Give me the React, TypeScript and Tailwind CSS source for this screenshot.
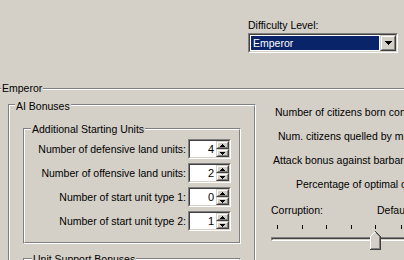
import type { ReactNode } from "react";

const font = { fontFamily: '"Liberation Sans", Arial, sans-serif' };

function GroupBox({
  label,
  className = "",
  innerClass = "",
  labelClass = "",
  children,
}: {
  label: string;
  className?: string;
  innerClass?: string;
  labelClass?: string;
  children?: ReactNode;
}) {
  return (
    <div className={`relative border border-t-[#808080] border-l-[#808080] border-r-white border-b-white ${className}`}>
      <div className={`h-full border border-t-white border-l-white border-r-[#808080] border-b-[#808080] ${innerClass}`}>
        {children}
      </div>
      <span className={`absolute bg-[#d4d0c8] px-[1px] leading-[13px] whitespace-nowrap ${labelClass}`}>{label}</span>
    </div>
  );
}

function Arrow({ up = false, w = 7, h = 4 }: { up?: boolean; w?: number; h?: number }) {
  const pts = up ? `0,${h} ${w / 2},0 ${w},${h}` : `0,0 ${w},0 ${w / 2},${h}`;
  return (
    <svg width={w} height={h} viewBox={`0 0 ${w} ${h}`} shapeRendering="crispEdges">
      <polygon points={pts} fill="#000" />
    </svg>
  );
}

function RaisedButton({ className = "", children }: { className?: string; children?: ReactNode }) {
  return (
    <div className={`border border-t-[#d4d0c8] border-l-[#d4d0c8] border-r-[#404040] border-b-[#404040] ${className}`}>
      <div className="flex h-full items-center justify-center border border-t-white border-l-white border-r-[#808080] border-b-[#808080] bg-[#d4d0c8]">
        {children}
      </div>
    </div>
  );
}

function Sunken({ className = "", children }: { className?: string; children?: ReactNode }) {
  return (
    <div className={`border border-t-[#808080] border-l-[#808080] border-r-white border-b-white ${className}`}>
      <div className="flex h-full border border-t-[#404040] border-l-[#404040] border-r-[#d4d0c8] border-b-[#d4d0c8] bg-white">
        {children}
      </div>
    </div>
  );
}

function Spinner({ value }: { value: number }) {
  return (
    <Sunken className="h-[20px] w-[43px]">
      <div className="flex-1 pr-[2px] text-right text-[11px] leading-[16px]">{value}</div>
      <div className="flex w-[13px] flex-col">
        <RaisedButton className="h-[8px]">
          <Arrow up w={5} h={3} />
        </RaisedButton>
        <RaisedButton className="h-[8px]">
          <Arrow w={5} h={3} />
        </RaisedButton>
      </div>
    </Sunken>
  );
}

const units = [
  { label: "Number of defensive land units:", value: 4 },
  { label: "Number of offensive land units:", value: 2 },
  { label: "Number of start unit type 1:", value: 0 },
  { label: "Number of start unit type 2:", value: 1 },
];

export default function App() {
  return (
    <div style={font} className="flex h-[260px] w-[404px] flex-col overflow-hidden bg-[#d4d0c8] text-[10.5px] text-black">
      {/* top: difficulty picker */}
      <div className="h-[88px] shrink-0 pl-[248px] pt-[19px]">
        <div className="h-[14px] leading-[13px]">Difficulty Level:</div>
        <Sunken className="h-[20px] w-[150px]">
          <div className="flex-1 p-[1px]">
            <div className="h-full bg-[#0a246a] pl-[2px] leading-[14px] text-white">Emperor</div>
          </div>
          <RaisedButton className="h-[16px] w-[16px]">
            <Arrow />
          </RaisedButton>
        </Sunken>
      </div>

      <GroupBox
        label="Emperor"
        className="-ml-[10px] h-[200px] w-[460px] shrink-0"
        labelClass="top-[-7px] left-[10px]"
        innerClass="flex"
      >
        <GroupBox
          label="AI Bonuses"
          className="ml-[16px] mt-[14px] h-[200px] w-[248px] shrink-0"
          labelClass="top-[-5px] left-[6px]"
          innerClass="px-[13px] pt-[22px]"
        >
          <GroupBox
            label="Additional Starting Units"
            className="h-[116px] w-[218px]"
            labelClass="top-[-6px] left-[7px]"
            innerClass="flex flex-col gap-[4px] pr-[8px] pt-[9px]"
          >
            {units.map((u) => (
              <div key={u.label} className="flex h-[20px] items-center justify-end gap-[2px]">
                <span className="whitespace-nowrap leading-[13px]">{u.label}</span>
                <Spinner value={u.value} />
              </div>
            ))}
          </GroupBox>
          <GroupBox
            label="Unit Support Bonuses"
            className="mt-[14px] h-[60px] w-[218px]"
            labelClass="top-[-6px] left-[8px]"
          />
        </GroupBox>

        <div className="flex flex-col whitespace-nowrap pt-[16px] leading-[13px]">
          <div className="flex flex-col gap-[11px]">
            <div className="h-[13px] pl-[19px]">Number of citizens born content</div>
            <div className="h-[13px] pl-[22px]">Num. citizens quelled by military police</div>
            <div className="h-[13px] pl-[17px]">Attack bonus against barbarians</div>
            <div className="h-[13px] pl-[40px]">Percentage of optimal cities</div>
          </div>
          <div className="mt-[13px] flex h-[13px] pl-[15px]">
            <span className="w-[106px]">Corruption:</span>
            <span>Default</span>
          </div>

          {/* slider */}
          <div className="relative ml-[15px] mt-[4px] h-[32px] w-[200px]">
            <div className="mt-[4px] flex h-[4px]">
              <div className="ml-[6px] w-px bg-black" />
              <div className="ml-[24px] w-px bg-black" />
              <div className="ml-[23px] w-px bg-black" />
              <div className="ml-[24px] w-px bg-black" />
              <div className="ml-[23px] w-px bg-black" />
              <div className="ml-[25px] w-px bg-black" />
            </div>
            <div className="mt-[8px] h-[4px] border border-t-[#808080] border-l-[#808080] border-r-white border-b-white">
              <div className="h-full border border-t-[#404040] border-l-[#404040] border-r-[#d4d0c8] border-b-[#d4d0c8]" />
            </div>
            <svg
              className="absolute left-[99px] top-[10px]"
              width="11"
              height="19"
              viewBox="0 0 11 19"
              shapeRendering="crispEdges"
            >
              <polygon points="0,5 5,0 11,6 11,19 0,19" fill="#d4d0c8" />
              <polyline points="0.5,18 0.5,5.5 5.5,0.5" fill="none" stroke="#fff" />
              <polyline points="5.5,0.5 10.5,5.5 10.5,18.5 0,18.5" fill="none" stroke="#404040" />
              <polyline points="5.5,1.8 9.5,5.8 9.5,17.5 1,17.5" fill="none" stroke="#808080" />
            </svg>
          </div>
        </div>
      </GroupBox>
    </div>
  );
}
